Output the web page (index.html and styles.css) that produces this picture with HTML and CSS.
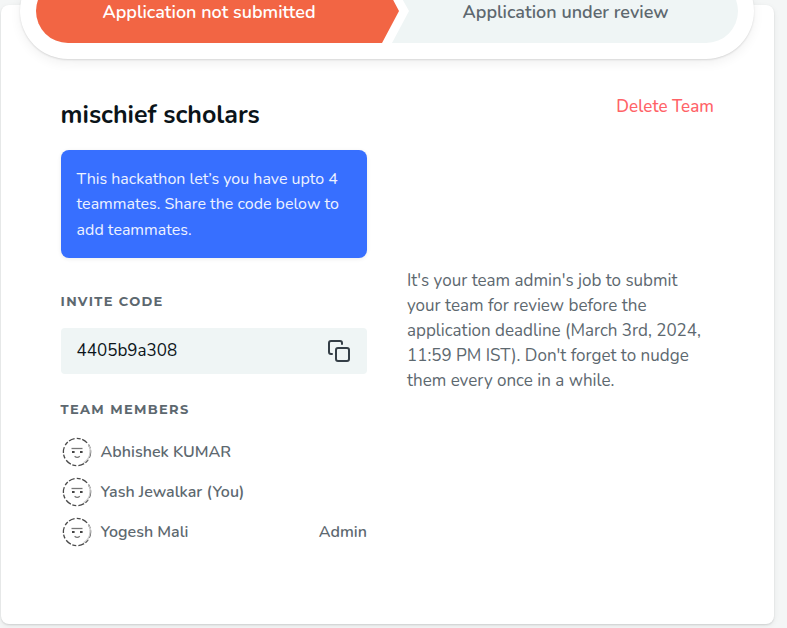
FILE: index.html
```html
<!DOCTYPE html>
<html lang="en">
<head>
<meta charset="utf-8">
<title>Team</title>
<link rel="stylesheet" href="styles.css">
</head>
<body>
<svg class="defs" width="0" height="0">
  <symbol id="face" viewBox="0 0 32 32">
    <circle cx="16" cy="16" r="13.6" fill="none" stroke="#4a4a4a" stroke-width="1.3" stroke-dasharray="6 2.2 4 1.6"/>
    <path d="M27.600 9a13 13 0 0 1-5 17.600" fill="none" stroke="#ccc" stroke-width="1.3"/>
    <path d="M10.500 12.500h11" stroke="#777" stroke-width="1.300"/>
    <path d="M11 16h2.600M19 16h2.600" stroke="#444" stroke-width="2.200"/>
    <path d="M13.600 20.200q2.600 2.400 5.200 0" fill="none" stroke="#777" stroke-width="1.200"/>
  </symbol>
</svg>
<main class="card">
  <nav class="stepper">
    <div class="step current"><span>Application not submitted</span></div>
    <div class="step next"><span>Application under review</span></div>
  </nav>
  <div class="content">
    <section class="team">
      <h1>mischief scholars</h1>
      <p class="notice">This hackathon let’s you have upto 4<br>teammates. Share the code below to<br>add teammates.</p>
      <h2 class="invite">INVITE CODE</h2>
      <div class="code"><span>4405b9a308</span>
        <svg width="24" height="24" viewBox="0 0 24 24" fill="none" stroke="#343e46" stroke-width="2" stroke-linejoin="round" stroke-linecap="round"><rect x="9" y="9" width="13" height="13" rx="2"/><path d="M5 15H4a2 2 0 0 1-2-2V4a2 2 0 0 1 2-2h9a2 2 0 0 1 2 2v1"/></svg>
      </div>
      <h2 class="members-title">TEAM MEMBERS</h2>
      <ul class="members">
        <li><svg width="32" height="32"><use href="#face"/></svg><span>Abhishek KUMAR</span></li>
        <li><svg width="32" height="32"><use href="#face"/></svg><span>Yash Jewalkar (You)</span></li>
        <li><svg width="32" height="32"><use href="#face"/></svg><span>Yogesh Mali</span><span class="role">Admin</span></li>
      </ul>
    </section>
    <aside class="side">
      <a class="delete">Delete Team</a>
      <p class="info">It's your team admin's job to submit<br>your team for review before the<br>application deadline (March 3rd, 2024,<br>11:59 PM IST). Don't forget to nudge<br>them every once in a while.</p>
    </aside>
  </div>
</main>
</body>
</html>
```
FILE: styles.css
```css
* { box-sizing: border-box; }
body {
  margin: 0;
  height: 628px;
  padding: 5px 13px 4px 1px;
  overflow: hidden;
  background: #f4f6f6;
  font-family: Nunito, "Noto Sans", sans-serif;
  color: #5d686f;
}
h1, h2, p, ul { margin: 0; padding: 0; }
span, p { white-space: nowrap; }
.defs { display: block; }
.card {
  height: 619px;
  background: #fff;
  border-radius: 8px;
  box-shadow: 0 1px 2px rgba(0, 0, 0, .12), 0 2px 6px rgba(0, 0, 0, .06);
  display: flow-root;
}
.stepper {
  margin: -42px 20px 0 19px;
  height: 96px;
  padding: 16px;
  border-radius: 48px;
  background: #fff;
  box-shadow: 0 1px 2px rgba(0, 0, 0, .12), 0 4px 12px rgba(0, 0, 0, .06);
  display: flex;
}
.step {
  height: 64px;
  display: flex;
  align-items: center;
  justify-content: center;
  font-size: 18px;
  font-weight: 600;
  padding-top: 2px;
}
.current {
  width: 363px;
  padding-right: 17px;
  color: #fff;
  background: #f26544;
  border-radius: 32px 0 0 32px;
  clip-path: polygon(0 0, 346px 0, 100% 50%, 346px 100%, 0 100%);
}
.next {
  width: 347px;
  margin-left: -8px;
  padding-left: 2px;
  background: #eff5f5;
  border-radius: 0 32px 32px 0;
  clip-path: polygon(0 0, 100% 0, 100% 100%, 1px 100%, 18px 50%);
}
.content { display: flex; padding: 37px 60px 0 59.6px; gap: 40px; }
.team { width: 306.4px; }
h1 { height: 38px; line-height: 38px; font-size: 25px; font-weight: 700; color: #0b1419; }
.notice {
  margin-top: 16px;
  height: 108px;
  padding: 17px 16px 0;
  border-radius: 8px;
  background: #376fff;
  color: #edf2ff;
  font-size: 16px;
  line-height: 25.4px;
  box-shadow: 0 1px 4px rgba(0, 0, 0, .08);
}
h2 { font-family: Montserrat, "Open Sans", sans-serif; font-size: 13px; line-height: 20px; font-weight: 700; letter-spacing: 1.35px; }
.invite { margin-top: 33px; }
.code {
  margin-top: 17px;
  height: 46px;
  padding: 0 16px;
  display: flex;
  align-items: center;
  justify-content: space-between;
  border-radius: 4px;
  background: #eff5f5;
  color: #0b1419;
  font-size: 17px;
}
.code span { margin-top: -1px; }
.members-title { margin-top: 25px; }
.members { margin-top: 13px; list-style: none; }
.members li { height: 40px; display: flex; align-items: center; gap: 8px; font-size: 16px; font-weight: 600; }
.role { margin-left: auto; }
.side { width: 307px; display: flex; flex-direction: column; }
.delete { align-self: flex-end; line-height: 22px; font-size: 17px; color: #ff6267; font-weight: 500; letter-spacing: .04px; }
.info { margin-top: 150px; font-size: 17px; line-height: 25px; }
```
